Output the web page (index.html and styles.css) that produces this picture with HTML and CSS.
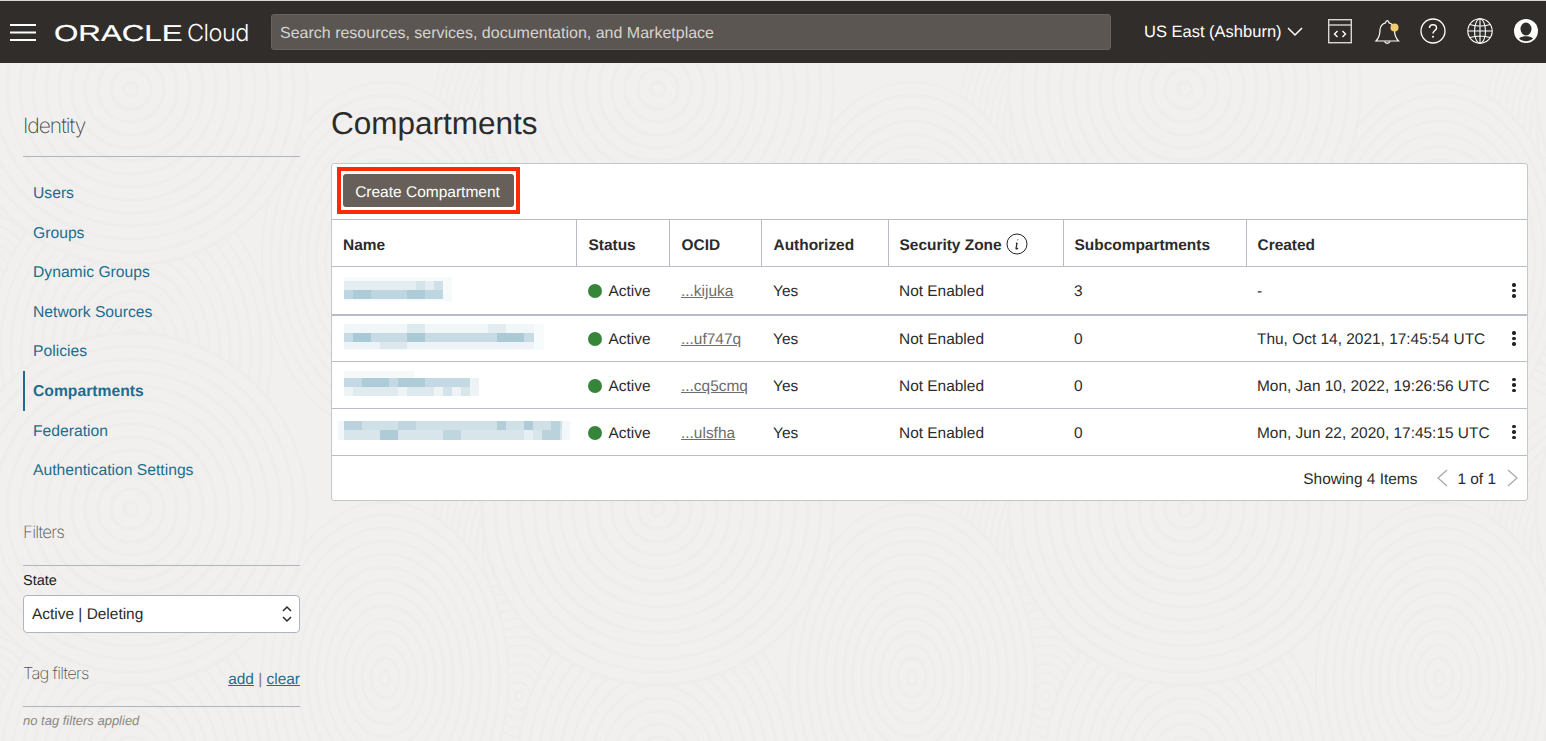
FILE: index.html
```html
<!DOCTYPE html>
<html lang="en">
<head>
  <meta charset="UTF-8">
  <title>Compartments</title>
  <link rel="stylesheet" href="styles.css">
</head>
<body>
  <!-- top bar -->
  <header class="topbar">
    <svg class="burger" width="26" height="17" viewBox="0 0 26 17"><path d="M0 1h26M0 8.500h26M0 16h26" stroke="#fff" stroke-width="2" fill="none"/></svg>
    <div class="brand"><span class="brand-mark">ORACLE</span><span class="brand-cloud">Cloud</span></div>
    <div class="search">Search resources, services, documentation, and Marketplace</div>
    <div class="region">US East (Ashburn)
      <svg width="16" height="10" viewBox="0 0 16 10"><path d="M1 1l7 7 7-7" stroke="#fff" stroke-width="1.500" fill="none"/></svg>
    </div>
    <svg class="tb-icon shell" width="26" height="26" viewBox="0 0 26 26" fill="none" stroke="#d9d7d5" stroke-width="1.400"><rect x="1.700" y="1.700" width="22.600" height="23"/><path d="M1.700 7h22.600"/><path d="M10.500 13l-3 3 3 3M15.500 13l3 3-3 3" stroke="#fff"/></svg>
    <svg class="tb-icon bell" width="26" height="28" viewBox="0 0 26 28" fill="none" stroke="#fff" stroke-width="1.200"><path d="M2 24c3-3 4-7 4-11 0-3.500 2.500-6.500 5.500-7.200.5-2.800 3-2.800 3.500 0 3 .7 5.500 3.700 5.500 7.200 0 4 1 8 4 11z"/><path d="M10.500 24.500a3 3 0 0 0 5.500 0"/><circle cx="20.500" cy="10.500" r="4" fill="#f0cc71" stroke="none"/></svg>
    <svg class="tb-icon help" width="26" height="26" viewBox="0 0 26 26" fill="none" stroke="#fff" stroke-width="1.300"><circle cx="13" cy="13" r="12"/><path d="M9.500 10c0-2 1.500-3.200 3.500-3.200s3.500 1.300 3.500 3.100c0 2.700-3.500 2.600-3.500 5.600" stroke-width="1.500"/><circle cx="13" cy="18.800" r="1" fill="#fff" stroke="none"/></svg>
    <svg class="tb-icon globe" width="26" height="26" viewBox="0 0 26 26" fill="none" stroke="#fff" stroke-width="1.100"><circle cx="13" cy="13" r="12.200"/><ellipse cx="13" cy="13" rx="5.500" ry="12.200"/><path d="M13 .8v24.400M.8 13h24.400M2.800 6.500c6 1.800 14.400 1.800 20.400 0M2.800 19.500c6-1.800 14.400-1.800 20.400 0"/></svg>
    <svg class="tb-icon avatar" width="24" height="24" viewBox="0 0 24 24"><circle cx="12" cy="12" r="12" fill="#fff"/><ellipse cx="12" cy="10" rx="5.500" ry="6.500" fill="#312d2a"/><path d="M5 19.500c2-2 4.500-2.300 7-2.300s5 .3 7 2.300c-2 1.800-4.500 2.700-7 2.700s-5-.9-7-2.700z" fill="#312d2a"/></svg>
  </header>

  <div class="page">
    <!-- side menu -->
    <aside class="sidebar">
      <h2 class="side-title">Identity</h2>
      <nav class="side-nav">
        <a href="#">Users</a>
        <a href="#">Groups</a>
        <a href="#">Dynamic Groups</a>
        <a href="#">Network Sources</a>
        <a href="#">Policies</a>
        <a href="#" class="active">Compartments</a>
        <a href="#">Federation</a>
        <a href="#">Authentication Settings</a>
      </nav>
      <h3 class="filter-title">Filters</h3>
      <label class="state-label">State</label>
      <div class="select"><span class="select-value">Active | Deleting</span>
        <svg width="10" height="18" viewBox="0 0 10 18" fill="none" stroke="#2a2a2a" stroke-width="1.500"><path d="M1 6l4-4 4 4M1 12l4 4 4-4"/></svg>
      </div>
      <div class="tag-head">
        <h3 class="tag-title">Tag filters</h3>
        <span class="tag-links"><a href="#">add</a> | <a href="#">clear</a></span>
      </div>
      <p class="tag-empty">no tag filters applied</p>
    </aside>

    <!-- main content -->
    <main class="content">
      <h1>Compartments</h1>
      <section class="card">
        <div class="toolbar">
          <div class="highlight"><button class="btn">Create Compartment</button></div>
        </div>
        <table>
          <colgroup>
            <col class="c-name"><col class="c-status"><col class="c-ocid"><col class="c-auth"><col class="c-zone"><col class="c-sub"><col class="c-created"><col class="c-menu">
          </colgroup>
          <thead>
            <tr>
              <th>Name</th>
              <th>Status</th>
              <th>OCID</th>
              <th>Authorized</th>
              <th>Security Zone <svg class="info" width="22" height="22" viewBox="0 0 22 22" fill="none" stroke="#222"><circle cx="11" cy="11" r="10"/><path d="M11.800 6.500v.8M11 10l-1 .3h1l-1 5c0 .8.8.8 2-.3" stroke-width="1.200"/></svg></th>
              <th>Subcompartments</th>
              <th colspan="2">Created</th>
            </tr>
          </thead>
          <tbody>
            <tr class="first">
              <td class="name-cell">
                <svg width="110" height="24" viewBox="0 0 110 24"><rect width="108" height="24" fill="#f7fafb"/><rect y="4" width="99" height="9" fill="#e3edf2"/><rect y="13" width="99" height="9" fill="#bed6e0"/><rect x="9" y="13" width="18" height="9" fill="#aecbd8"/><rect x="63" y="13" width="18" height="9" fill="#aecbd8"/><rect x="90" y="4" width="9" height="9" fill="#cfe0e7"/><rect x="72" y="4" width="9" height="9" fill="#d5e4ea"/></svg>
              </td>
              <td><span class="dot"></span>Active</td>
              <td><a class="ocid" href="#">...kijuka</a></td>
              <td>Yes</td>
              <td>Not Enabled</td>
              <td>3</td>
              <td>-</td>
              <td class="menu-cell"><span class="kebab"><i></i><i></i><i></i></span></td>
            </tr>
            <tr>
              <td class="name-cell">
                <svg width="202" height="26" viewBox="0 0 202 26"><rect width="200" height="26" fill="#f8fbfc"/><rect x="0" y="0" width="190" height="9" fill="#f1f6f8"/><rect x="63" y="0" width="18" height="9" fill="#dfeaef"/><rect x="144" y="0" width="18" height="9" fill="#e3edf1"/><rect y="9" width="190" height="9" fill="#c6dbe4"/><rect x="9" y="9" width="18" height="9" fill="#a9c9d6"/><rect x="63" y="9" width="18" height="9" fill="#acc9d6"/><rect x="153" y="9" width="27" height="9" fill="#acc9d6"/><rect y="18" width="190" height="7" fill="#edf3f6"/><rect x="36" y="18" width="27" height="7" fill="#dce8ed"/></svg>
              </td>
              <td><span class="dot"></span>Active</td>
              <td><a class="ocid" href="#">...uf747q</a></td>
              <td>Yes</td>
              <td>Not Enabled</td>
              <td>0</td>
              <td>Thu, Oct 14, 2021, 17:45:54 UTC</td>
              <td class="menu-cell"><span class="kebab"><i></i><i></i><i></i></span></td>
            </tr>
            <tr>
              <td class="name-cell">
                <svg width="136" height="26" viewBox="0 0 136 26"><rect y="0" width="70" height="7" fill="#f5f9fa"/><rect y="7" width="126" height="9" fill="#c4d9e3"/><rect x="18" y="7" width="27" height="9" fill="#aecbd8"/><rect x="54" y="7" width="27" height="9" fill="#aecbd8"/><rect x="126" y="7" width="9" height="9" fill="#edf4f6"/><rect x="0" y="16" width="135" height="9" fill="#eef4f6"/><rect x="9" y="16" width="45" height="9" fill="#e0ebef"/><rect x="63" y="16" width="27" height="9" fill="#dde9ee"/><rect x="99" y="16" width="9" height="9" fill="#d4e3e9"/><rect x="117" y="16" width="9" height="9" fill="#d9e6eb"/></svg>
              </td>
              <td><span class="dot"></span>Active</td>
              <td><a class="ocid" href="#">...cq5cmq</a></td>
              <td>Yes</td>
              <td>Not Enabled</td>
              <td>0</td>
              <td>Mon, Jan 10, 2022, 19:26:56 UTC</td>
              <td class="menu-cell"><span class="kebab"><i></i><i></i><i></i></span></td>
            </tr>
            <tr>
              <td class="name-cell">
                <svg class="wide" width="232" height="20" viewBox="0 0 232 20"><rect width="232" height="19" fill="#f3f7f9"/><rect x="6" width="218" height="9" fill="#cfe0e7"/><rect x="6" y="9" width="218" height="10" fill="#d8e6ec"/><rect x="6" width="18" height="9" fill="#b9d2dd"/><rect x="60" width="18" height="9" fill="#bfd6e0"/><rect x="159" width="9" height="9" fill="#b3ced9"/><rect x="186" width="9" height="9" fill="#b0ccd8"/><rect x="213" width="9" height="9" fill="#b9d2dc"/><rect x="42" y="9" width="18" height="10" fill="#aecbd7"/><rect x="105" y="9" width="18" height="10" fill="#bfd6df"/><rect x="204" y="9" width="18" height="10" fill="#b9d2dc"/><rect x="186" y="9" width="9" height="10" fill="#e6eff3"/></svg>
              </td>
              <td><span class="dot"></span>Active</td>
              <td><a class="ocid" href="#">...ulsfha</a></td>
              <td>Yes</td>
              <td>Not Enabled</td>
              <td>0</td>
              <td>Mon, Jun 22, 2020, 17:45:15 UTC</td>
              <td class="menu-cell"><span class="kebab"><i></i><i></i><i></i></span></td>
            </tr>
          </tbody>
        </table>
        <div class="pager">
          <span class="pager-count">Showing 4 Items</span>
          <svg width="12" height="18" viewBox="0 0 12 18" fill="none" stroke="#a9a9a9" stroke-width="1.300"><path d="M11 1L2 9l9 8"/></svg>
          <span class="pager-page">1 of 1</span>
          <svg width="12" height="18" viewBox="0 0 12 18" fill="none" stroke="#a9a9a9" stroke-width="1.300"><path d="M1 1l9 8-9 8"/></svg>
        </div>
      </section>
    </main>
  </div>
</body>
</html>
```

FILE: styles.css
```css
* {
  box-sizing: border-box;
}

body {
  margin: 0;
  height: 741px;
  overflow: hidden;
  font-family: "Liberation Sans", Arial, sans-serif;
  font-size: 15.450px;
  text-rendering: geometricPrecision;
  color: #2b2b2b;
  background-color: #f1f0ef;
  /* fingerprint swirl tile */
  background-image: url("data:image/svg+xml,<svg xmlns='http://www.w3.org/2000/svg' xmlns:xlink='http://www.w3.org/1999/xlink' width='527' height='420'><defs><g id='r' fill='none' stroke='%23eeedeb' stroke-width='3'><circle r='176' fill='%23f1f0ef'/><circle r='163'/><circle r='150'/><circle r='137'/><circle r='124'/><circle r='111'/><circle r='98'/><circle r='85'/><circle r='72'/><circle r='59'/><circle r='46'/><circle r='33'/><circle r='20'/><circle r='7'/></g></defs><use xlink:href='%23r' transform='translate(518 149) scale(.5 .8)'/><use xlink:href='%23r' transform='translate(-9 149) scale(.5 .8)'/><use xlink:href='%23r' transform='translate(518 296) scale(.55 .7)'/><use xlink:href='%23r' transform='translate(-9 296) scale(.55 .7)'/><use xlink:href='%23r' transform='translate(130 370) scale(.8 1)'/><use xlink:href='%23r' transform='translate(657 370) scale(.8 1)'/><use xlink:href='%23r' transform='translate(130 -50) scale(.8 1)'/><use xlink:href='%23r' transform='translate(657 -50) scale(.8 1)'/><use xlink:href='%23r' transform='translate(384 278) scale(.7 1)'/><use xlink:href='%23r' transform='translate(384 -142) scale(.7 1)'/><use xlink:href='%23r' transform='translate(130 109)'/><use xlink:href='%23r' transform='translate(657 109)'/><use xlink:href='%23r' transform='translate(-397 109)'/><use xlink:href='%23r' transform='translate(130 529)'/><use xlink:href='%23r' transform='translate(657 529)'/></svg>");
  background-position: 1px -20px;
}

/* top bar */
.topbar {
  display: flex;
  align-items: center;
  height: 63px;
  padding-left: 10px;
  background: #312d2a;
  border-top: 1px solid #d8d6d4;
  color: #fff;
}

.burger {
  flex: none;
}

.brand {
  display: flex;
  align-items: baseline;
  width: 217px;
  margin-left: 18px;
  flex: none;
}

.brand-mark {
  display: inline-block;
  width: 133px;
  font-size: 23px;
  line-height: 24px;
  -webkit-text-stroke: 0.2px #fff;
  transform: scaleX(1.36);
  transform-origin: left center;
}

.brand-cloud {
  font-family: Inter, sans-serif;
  font-weight: 300;
  font-size: 23.500px;
  letter-spacing: -0.5px;
}

.search {
  width: 840px;
  height: 36px;
  flex: none;
  padding-left: 8px;
  background: #5b5652;
  border-radius: 3px;
  border: 1px solid #67625e;
  color: #d6d3d0;
  font-size: 16px;
  line-height: 37px;
}

.region {
  display: flex;
  align-items: center;
  gap: 5px;
  margin-left: 33px;
  font-size: 16.500px;
  white-space: nowrap;
}

.tb-icon {
  flex: none;
  margin-bottom: 2px;
}

.shell {
  margin-left: 24px;
}

.bell {
  margin-left: 21px;
}

.help {
  margin-left: 20px;
}

.globe {
  margin-left: 21px;
}

.avatar {
  margin-left: 21px;
}

/* layout */
.page {
  display: flex;
}

.sidebar {
  width: 277px;
  margin-left: 23px;
  flex: none;
}

.content {
  width: 1197px;
  margin-left: 31px;
  flex: none;
}

/* side menu */
.side-title {
  margin: 50px 0 0;
  height: 44px;
  border-bottom: 1px solid #aeb4c1;
  font-family: Inter, sans-serif;
  font-size: 21px;
  font-weight: 200;
  line-height: 28px;
  letter-spacing: -1px;
  color: #44413e;
}

.side-nav {
  display: flex;
  flex-direction: column;
  margin-top: 16px;
}

.side-nav a {
  height: 39.600px;
  padding-left: 10px;
  font-size: 15.700px;
  line-height: 41px;
  color: #1f6d8e;
  text-decoration: none;
}

.side-nav a.active {
  border-left: 2px solid #1f6d8e;
  padding-left: 8px;
  font-weight: bold;
}

.filter-title {
  margin: 30px 0 0;
  height: 46px;
  border-bottom: 1px solid #aeb4c1;
  font-family: Inter, sans-serif;
  font-size: 17px;
  font-weight: 200;
  line-height: 26px;
  letter-spacing: -0.8px;
  color: #55524f;
}

.state-label {
  display: block;
  margin-top: 6px;
  line-height: 18px;
  font-size: 14.500px;
  color: #222;
}

.select {
  display: flex;
  align-items: center;
  justify-content: space-between;
  height: 38px;
  margin-top: 5px;
  padding: 0 7px 0 8px;
  background: #fff;
  border: 1px solid #aeb4c1;
  border-radius: 4px;
  color: #2b2b2b;
}

.select-value {
  padding-top: 3px;
}

.tag-head {
  display: flex;
  justify-content: space-between;
  align-items: flex-end;
  height: 74px;
  padding-bottom: 17px;
  border-bottom: 1px solid #aeb4c1;
}

.tag-title {
  margin: 0 0 4px;
  font-family: Inter, sans-serif;
  font-size: 16.500px;
  font-weight: 200;
  line-height: 24px;
  letter-spacing: -0.7px;
  color: #55524f;
}

.tag-links {
  color: #777;
  line-height: 18px;
}

.tag-links a {
  color: #1f6d8e;
}

.tag-empty {
  margin: 6px 0 0;
  font-size: 13px;
  font-style: italic;
  color: #8a8784;
}

/* main */
h1 {
  margin: 39px 0 0;
  font-size: 31.500px;
  font-weight: normal;
  line-height: 42px;
  color: #2b2b2b;
}

.card {
  margin-top: 19px;
  height: 338px;
  background: #fff;
  border: 1px solid #c3c7d0;
  border-radius: 3px;
}

.toolbar {
  height: 55px;
  padding: 3px 5px;
}

.highlight {
  width: 183px;
  height: 47px;
  padding: 3px 2px;
  border: 4px solid #fb2b08;
}

.btn {
  display: block;
  width: 171px;
  height: 33px;
  margin: 0;
  padding: 5px 2px 0 0;
  border: 0;
  border-radius: 3px;
  background: #665f5a;
  color: #fff;
  font-family: inherit;
  font-size: 15.500px;
  text-rendering: geometricPrecision;
}

table {
  width: 100%;
  table-layout: fixed;
  border-collapse: collapse;
}

.c-name { width: 244px; }
.c-status { width: 93px; }
.c-ocid { width: 92px; }
.c-auth { width: 127px; }
.c-zone { width: 175px; }
.c-sub { width: 183px; }
.c-created { width: 264px; }

th {
  height: 47px;
  padding: 6px 11px 0;
  border-top: 1px solid #b8bcc7;
  border-bottom: 1px solid #b8bcc7;
  border-left: 1px solid #b8bcc7;
  text-align: left;
  font-weight: bold;
  color: #2b2b2b;
  white-space: nowrap;
}

td {
  height: 47px;
  padding: 4px 11px 0;
  border-bottom: 1px solid #b8bcc7;
  white-space: nowrap;
  color: #2b2b2b;
}

th:nth-child(-n+4),
td:nth-child(-n+4) {
  padding-left: 12px;
}

th:first-child {
  padding-left: 11px;
  border-left: 0;
}

.info {
  vertical-align: middle;
  margin: -4px 0 0;
}

tr.first td {
  height: 48px;
  border-bottom-width: 2px;
}

td.name-cell {
  padding: 0 0 2px 12px;
  line-height: 0;
}

.name-cell .wide {
  margin-left: -6px;
}

.dot {
  display: inline-block;
  width: 14px;
  height: 14px;
  margin-right: 6.500px;
  vertical-align: -2px;
  border-radius: 50%;
  background: #36853b;
}

.ocid {
  color: #6f6c69;
}

td.menu-cell {
  padding: 0;
}

.kebab {
  display: flex;
  flex-direction: column;
  align-items: center;
  gap: 2px;
  width: 4px;
  margin-left: 2px;
}

.kebab i {
  width: 3.500px;
  height: 3.500px;
  border-radius: 50%;
  background: #222;
}

.pager {
  display: flex;
  align-items: center;
  justify-content: flex-end;
  height: 44px;
  padding: 3px 8px 0 0;
}

.pager svg {
  margin-top: -3px;
}

.pager-count {
  margin-right: 19px;
}

.pager-page {
  margin: 0 11px 0 9px;
}
```
